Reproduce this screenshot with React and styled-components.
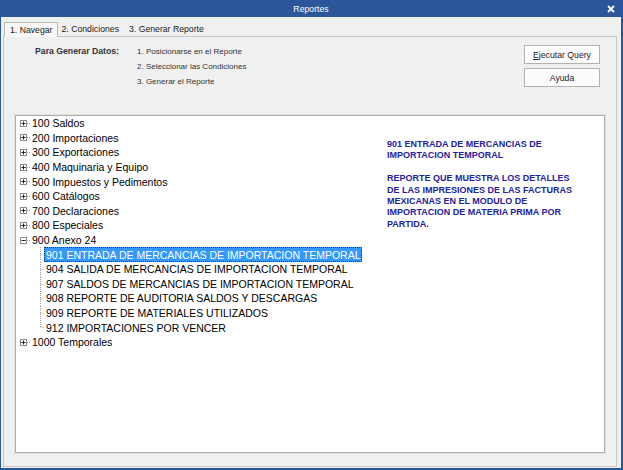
import React from "react";
import styled, { createGlobalStyle } from "styled-components";

const GlobalStyle = createGlobalStyle`
  body {
    margin: 0;
    font-family: "Liberation Sans", Arial, sans-serif;
  }
`;

const Window = styled.div`
  width: 623px;
  height: 470px;
  box-sizing: border-box;
  display: flex;
  flex-direction: column;
  background: #f0f0f0;
  border: solid #2b579a;
  border-width: 0 2px 2px 1px;
`;

const TitleBar = styled.div`
  height: 17px;
  flex: none;
  display: grid;
  grid-template-columns: 20px 1fr 20px;
  align-items: center;
  background: #2b579a;
  color: #fff;
  font-size: 8.7px;
`;

const Title = styled.span`
  grid-column: 2;
  text-align: center;
`;

const Close = styled.span`
  display: flex;
  justify-content: center;
  align-items: center;
`;

const TabStrip = styled.div`
  height: 19px;
  flex: none;
  box-sizing: border-box;
  display: flex;
  align-items: flex-end;
  padding-left: 3px;
  position: relative;
  z-index: 1;
`;

const Tab = styled.div`
  box-sizing: border-box;
  height: ${(p) => (p.$active ? "15px" : "13px")};
  margin-bottom: ${(p) => (p.$active ? "-1px" : "0")};
  padding: ${(p) => (p.$active ? "1px 4px 0 5px" : "0 6px 0 4px")};
  font-size: 8.7px;
  line-height: 12px;
  color: #222;
  background: ${(p) => (p.$active ? "#f7f7f7" : "transparent")};
  border: ${(p) => (p.$active ? "1px solid #b9b9b9" : "none")};
  border-bottom: none;
`;

const Panel = styled.div`
  flex: 1;
  display: flex;
  flex-direction: column;
  margin: 0 4px 1px 2px;
  border: 1px solid #c6c6c6;
  background: #f0f0f0;
`;

const Header = styled.div`
  height: 78px;
  flex: none;
  box-sizing: border-box;
  display: flex;
  align-items: flex-start;
  padding: 7px 16px 0 31px;
`;

const IntroLabel = styled.div`
  width: 102px;
  font-size: 8.7px;
  font-weight: bold;
  line-height: 15px;
  color: #333;
`;

const Steps = styled.div`
  flex: 1;
  font-size: 8px;
  line-height: 15px;
  color: #333;
`;

const Actions = styled.div`
  width: 76px;
  margin-top: 1px;
  display: flex;
  flex-direction: column;
  gap: 4px;
`;

const Button = styled.button`
  height: 19px;
  padding: 0;
  border: 1px solid #b3b3b3;
  background: #fcfcfc;
  font-family: inherit;
  font-size: 8.7px;
  color: #222;

  u {
    text-decoration: underline;
  }
`;

const TreeBox = styled.div`
  flex: 1;
  margin: 0 11px 13px 11px;
  display: grid;
  grid-template-columns: 371px 1fr;
  align-items: start;
  background: #fff;
  border: 1px solid #acacac;
  box-shadow: 0 0 0 1px #e2e2e2;
`;

const Tree = styled.div`
  display: flex;
  flex-direction: column;
`;

const Row = styled.div`
  height: 14.6px;
  display: flex;
  align-items: center;
  padding-left: ${(p) => (p.$child ? "21px" : "4px")};
`;

const Stub = styled.span`
  width: 3px;
  border-top: 1px dotted #a0a0a0;
`;

const Connector = styled.svg`
  width: 7px;
  align-self: stretch;
  flex: none;
`;

const Label = styled.span`
  box-sizing: border-box;
  height: 15px;
  padding: 0 1px;
  display: flex;
  align-items: center;
  white-space: nowrap;
  font-size: 10.5px;
  color: ${(p) => (p.$selected ? "#fff" : "#000")};
  background: ${(p) => (p.$selected ? "#3399ff" : "transparent")};
  border: 1px ${(p) => (p.$selected ? "dotted #0d3f87" : "solid transparent")};
`;

const Description = styled.div`
  padding-top: 23px;
  font-size: 9px;
  font-weight: bold;
  line-height: 11.4px;
  color: #2222a0;

  p {
    margin: 0 0 11.4px;
  }
`;

const Expander = ({ open }) => (
  <svg width="7" height="7" viewBox="0 0 7 7" style={{ flex: "none" }}>
    <rect x="0.5" y="0.5" width="6" height="6" fill="#fff" stroke="#8c8c8c" />
    <line x1="1.5" y1="3.5" x2="5.5" y2="3.5" stroke="#222" />
    {!open && <line x1="3.5" y1="1.5" x2="3.5" y2="5.5" stroke="#222" />}
  </svg>
);

const CloseIcon = () => (
  <svg width="8" height="8" viewBox="0 0 8 8">
    <path d="M1 1 L7 7 M7 1 L1 7" stroke="#fff" strokeWidth="1.8" />
  </svg>
);

const groups = [
  { name: "100 Saldos" },
  { name: "200 Importaciones" },
  { name: "300 Exportaciones" },
  { name: "400 Maquinaria y Equipo" },
  { name: "500 Impuestos y Pedimentos" },
  { name: "600 Catálogos" },
  { name: "700 Declaraciones" },
  { name: "800 Especiales" },
  {
    name: "900 Anexo 24",
    open: true,
    children: [
      "901 ENTRADA DE MERCANCIAS DE IMPORTACION TEMPORAL",
      "904 SALIDA DE MERCANCIAS DE IMPORTACION TEMPORAL",
      "907 SALDOS DE MERCANCIAS DE IMPORTACION TEMPORAL",
      "908 REPORTE DE AUDITORIA SALDOS Y DESCARGAS",
      "909 REPORTE DE MATERIALES UTILIZADOS",
      "912 IMPORTACIONES POR VENCER",
    ],
  },
  { name: "1000 Temporales" },
];

const selected = "901 ENTRADA DE MERCANCIAS DE IMPORTACION TEMPORAL";

const App = () => {
  return (
    <>
      <GlobalStyle />
      <Window>
        <TitleBar>
          <Title>Reportes</Title>
          <Close>
            <CloseIcon />
          </Close>
        </TitleBar>
        <TabStrip>
          <Tab $active>1. Navegar</Tab>
          <Tab>2. Condiciones</Tab>
          <Tab>3. Generar Reporte</Tab>
        </TabStrip>
        <Panel>
          <Header>
            <IntroLabel>Para Generar Datos:</IntroLabel>
            <Steps>
              <div>1. Posicionarse en el Reporte</div>
              <div>2. Seleccionar las Condiciones</div>
              <div>3. Generar el Reporte</div>
            </Steps>
            <Actions>
              <Button>
                <u>E</u>jecutar Query
              </Button>
              <Button>Ayuda</Button>
            </Actions>
          </Header>
          <TreeBox>
            <Tree>
              {groups.map((g) => (
                <React.Fragment key={g.name}>
                  <Row>
                    <Expander open={g.open} />
                    <Stub />
                    <Label>{g.name}</Label>
                  </Row>
                  {g.open &&
                    g.children.map((c, i) => {
                      const last = i === g.children.length - 1;
                      return (
                        <Row $child key={c}>
                          <Connector viewBox="0 0 7 14" preserveAspectRatio="none">
                            <path
                              d={`M3.5 0 V${last ? 7 : 14} M3.5 7 H7`}
                              stroke="#a0a0a0"
                              strokeDasharray="1 1"
                              fill="none"
                              vectorEffect="non-scaling-stroke"
                            />
                          </Connector>
                          <Label $selected={c === selected}>{c}</Label>
                        </Row>
                      );
                    })}
                </React.Fragment>
              ))}
            </Tree>
            <Description>
              <p>
                901 ENTRADA DE MERCANCIAS DE
                <br />
                IMPORTACION TEMPORAL
              </p>
              <p>
                REPORTE QUE MUESTRA LOS DETALLES
                <br />
                DE LAS IMPRESIONES DE LAS FACTURAS
                <br />
                MEXICANAS EN EL MODULO DE
                <br />
                IMPORTACION DE MATERIA PRIMA POR
                <br />
                PARTIDA.
              </p>
            </Description>
          </TreeBox>
        </Panel>
      </Window>
    </>
  );
};

export default App;
